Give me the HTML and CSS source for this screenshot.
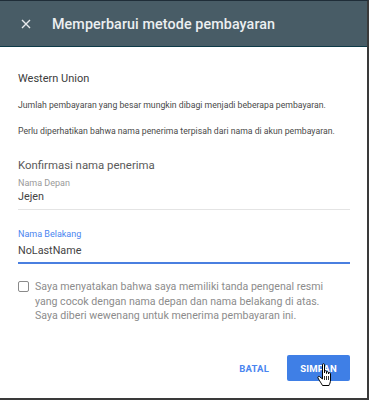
FILE: index.html
```html
<!DOCTYPE html>
<html lang="id">
<head>
  <meta charset="UTF-8" />
  <title>Memperbarui metode pembayaran</title>
  <link rel="stylesheet" href="styles.css">
</head>
<body>

  <div class="dialog">
    <!-- Title bar -->
    <div class="dialog-header">
      <svg class="close-icon" width="10" height="10" viewBox="0 0 10 10">
        <path d="M1 1 L9 9 M9 1 L1 9" stroke="#e8eaed" stroke-width="1.4" fill="none" />
      </svg>
      <h1>Memperbarui metode pembayaran</h1>
    </div>

    <div class="dialog-body">
      <div class="method">Western Union</div>
      <p class="note">Jumlah pembayaran yang besar mungkin dibagi menjadi beberapa pembayaran.</p>
      <p class="note">Perlu diperhatikan bahwa nama penerima terpisah dari nama di akun pembayaran.</p>

      <h2>Konfirmasi nama penerima</h2>

      <div class="field">
        <label>Nama Depan</label>
        <div class="field-value">Jejen</div>
      </div>

      <div class="field focused">
        <label>Nama Belakang</label>
        <div class="field-value">NoLastName</div>
      </div>

      <div class="confirm">
        <span class="checkbox"></span>
        <p>Saya menyatakan bahwa saya memiliki tanda pengenal resmi yang cocok dengan nama depan dan nama belakang di atas. Saya diberi wewenang untuk menerima pembayaran ini.</p>
      </div>
    </div>

    <!-- Actions -->
    <div class="dialog-actions">
      <button class="btn-flat">BATAL</button>
      <button class="btn-primary">SIMPAN
        <svg class="cursor" width="18" height="24" viewBox="0 0 18 24">
          <path d="M5.5 1.5 C5.5 0.5 7.5 0.5 7.5 1.5 L7.5 10 L7.5 8.5 C7.5 7.5 9.5 7.5 9.5 8.5 L9.5 10.5 L9.5 9.5 C9.5 8.5 11.5 8.5 11.5 9.5 L11.5 11 L11.5 10.5 C11.5 9.5 13.5 9.5 13.5 10.5 L13.5 17 C13.5 19.5 12.5 21 12 22.5 L5.5 22.5 C4.5 20.5 2.5 18 1 15 C0.5 14 1.5 12.8 2.6 13.6 L5.5 16 Z"
                fill="#fff" stroke="#000" stroke-width="1" stroke-linejoin="round" />
          <path d="M7.5 13 L7.5 17 M9.5 13 L9.5 17 M11.5 13 L11.5 17" stroke="#000" stroke-width="0.8" />
        </svg>
      </button>
    </div>
  </div>

</body>
</html>
```

FILE: styles.css
```css
/*********************************
 * Page
 *********************************/
html, body {
  margin: 0;
  padding: 0;
  background-color: #ffffff;
  font-family: Roboto, "Noto Sans", Arial, sans-serif;
}

.dialog {
  display: flex;
  flex-direction: column;
  width: 369px;
  height: 400px;
  box-sizing: border-box;
  border-top: 1px solid #1f2d38;
  border-right: 2px solid #3a3a3a;
  border-bottom: 2px solid #3a3a3a;
  background: #ffffff;
}

/* Header */
.dialog-header {
  display: flex;
  align-items: center;
  height: 45px;
  padding-left: 21px;
  background-color: #485c66;
  border-bottom: 1px solid #0e3a48;
}
.close-icon {
  flex: none;
}
.dialog-header h1 {
  margin: 0 0 0 21px;
  font-size: 14.3px;
  font-weight: 500;
  color: #eceff1;
  letter-spacing: 0.1px;
}

/*============================
  Body
============================*/
.dialog-body {
  padding: 0 17px 0 18px;
}
.method {
  margin-top: 25px;
  font-size: 11px;
  line-height: 14px;
  color: #3c3c3c;
}
.note {
  margin: 13px 0 0;
  font-size: 8.7px;
  line-height: 13px;
  color: #4a4a4a;
}
.dialog-body h2 {
  margin: 19px 0 0;
  font-size: 11.4px;
  line-height: 16px;
  font-weight: normal;
  color: #5a5a5a;
}

/* text fields */
.field {
  margin-top: 5px;
  padding-bottom: 4px;
  border-bottom: 1px solid #e4e4e4;
}
.field label {
  display: block;
  font-size: 9px;
  line-height: 10px;
  color: #9a9a9a;
}
.field-value {
  margin-top: 1px;
  font-size: 10.8px;
  line-height: 16px;
  color: #444444;
}
.field.focused {
  margin-top: 19px;
  padding-bottom: 3px;
  border-bottom: 2px solid #4a7fe0;
}
.field.focused label {
  color: #4a85f0;
}
.field.focused .field-value {
  margin-top: 4px;
}

/* confirmation checkbox */
.confirm {
  display: flex;
  gap: 6px;
  margin-top: 16px;
  padding-right: 14px;
}
.checkbox {
  flex: none;
  width: 9px;
  height: 9px;
  margin-top: 1px;
  border: 1.5px solid #8a8a8a;
  border-radius: 2px;
}
.confirm p {
  margin: 0;
  font-size: 10.6px;
  line-height: 14.5px;
  color: #8c8c8c;
}

/*============================
  Actions
============================*/
.dialog-actions {
  display: flex;
  justify-content: flex-end;
  align-items: center;
  gap: 11px;
  margin-top: auto;
  padding: 0 17px 17px 0;
}
.dialog-actions button {
  font-family: inherit;
  font-size: 9.5px;
  font-weight: bold;
  letter-spacing: 0.2px;
  border: none;
  cursor: pointer;
}
.btn-flat {
  background: none;
  color: #4a85f0;
  padding: 0 7px;
  height: 26px;
}
.btn-primary {
  position: relative;
  width: 63px;
  height: 26px;
  border-radius: 2px;
  background-color: #3f7fe6;
  color: #ffffff;
}
.cursor {
  position: absolute;
  left: 30px;
  top: 8px;
}
```
